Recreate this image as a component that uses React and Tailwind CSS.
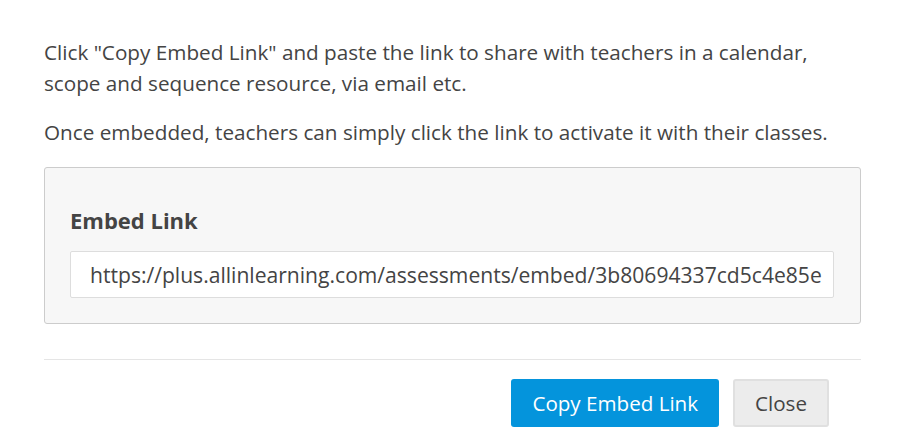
export default function App() {
  return (
    <div className="min-h-screen bg-white px-[44px] pt-[37px] text-[#444] [font-family:'Open_Sans',sans-serif]">
      <p className="text-[20.7px] leading-[31px]">
        Click "Copy Embed Link" and paste the link to share with teachers in a calendar, scope and sequence resource, via email etc.
      </p>
      <p className="mt-[18px] text-[20.7px] leading-[31px]">
        Once embedded, teachers can simply click the link to activate it with their classes.
      </p>

      {/* embed box */}
      <div className="mt-[19px] rounded-[3px] border border-[#ccc] bg-[#f7f7f7] pl-[25px] pr-[26px] pt-[37px] pb-[25px]">
        <h4 className="text-[22px] font-bold leading-[30px] text-[#444]">Embed Link</h4>
        <input
          readOnly
          value="https://plus.allinlearning.com/assessments/embed/3b80694337cd5c4e85e"
          className="mt-[16px] block h-[47px] w-full rounded-[2px] border border-[#ddd] bg-white pl-[19px] pr-[2px] text-[21.1px] text-[#444] outline-none"
        />
      </div>

      <div className="mt-[35px] border-t border-[#e5e5e5] pt-[19px] flex justify-end gap-[14px] pr-[32px]">
        <button className="h-[48px] rounded-[3px] bg-[#0494dc] px-[21px] text-[20.6px] text-white">
          Copy Embed Link
        </button>
        <button className="h-[48px] rounded-[3px] border-2 border-[#e0e0e0] bg-[#ececec] px-[20px] text-[20.6px] text-[#444]">
          Close
        </button>
      </div>
    </div>
  );
}
